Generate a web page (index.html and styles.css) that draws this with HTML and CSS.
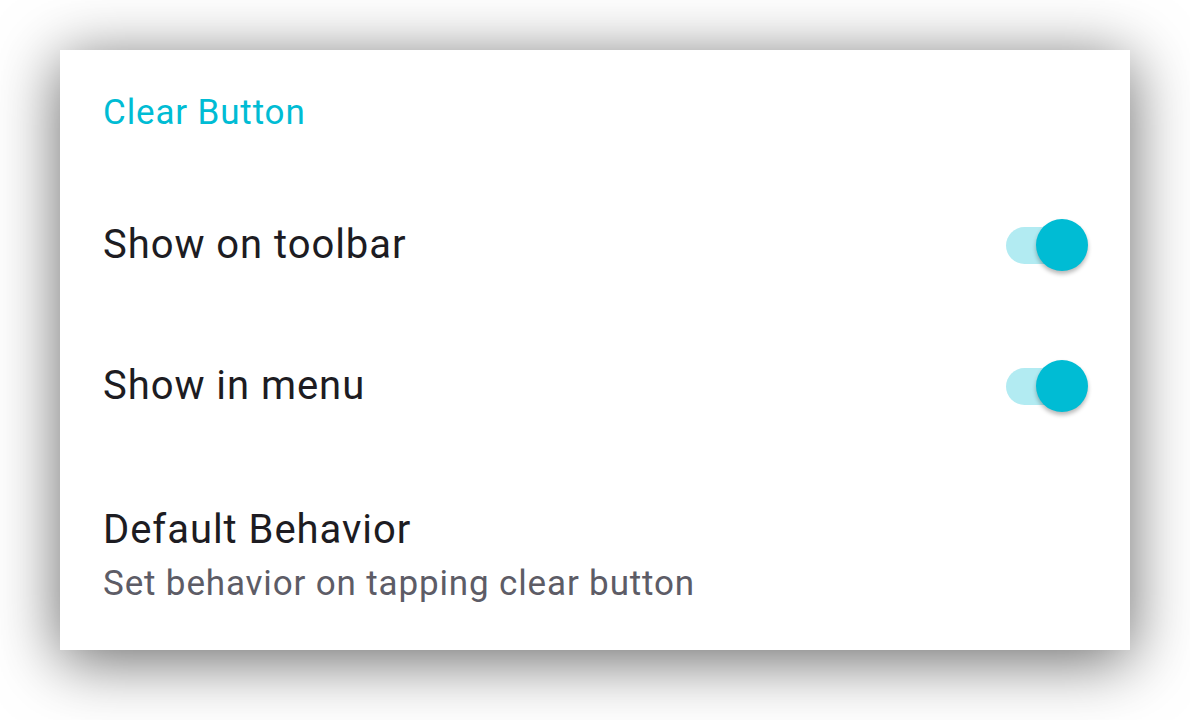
FILE: index.html
```html
<!DOCTYPE html>
<html>
<head>
<meta charset="utf-8">
<link rel="stylesheet" href="styles.css">
</head>
<body>
<div class="card">
  <div class="category">Clear Button</div>
  <div class="row">
    <div class="title">Show on toolbar</div>
    <div class="switch"><div class="track"></div><div class="thumb"></div></div>
  </div>
  <div class="row">
    <div class="title">Show in menu</div>
    <div class="switch"><div class="track"></div><div class="thumb"></div></div>
  </div>
  <div class="row-sum">
    <div class="title">Default Behavior</div>
    <div class="summary">Set behavior on tapping clear button</div>
  </div>
</div>
</body>
</html>
```
FILE: styles.css
```css
html, body {
  margin: 0;
  padding: 0;
  background: #ffffff;
}
body {
  width: 1190px;
  height: 720px;
  overflow: hidden;
  font-family: Roboto, "Liberation Sans", sans-serif;
  padding-top: 50px;
  padding-left: 60px;
  box-sizing: border-box;
}
.card {
  width: 1070px;
  height: 600px;
  background: #ffffff;
  box-shadow: 0 10px 60px rgba(0, 0, 0, 0.6);
  padding: 43px 42px 0 43px;
  box-sizing: border-box;
}
.category {
  font-size: 35px;
  line-height: 40px;
  letter-spacing: 0.85px;
  color: #00bcd4;
  margin-bottom: 41.5px;
}
.row {
  height: 141px;
  display: flex;
  align-items: center;
  justify-content: space-between;
}
.title {
  font-size: 40px;
  line-height: 46px;
  letter-spacing: 0.95px;
  color: #1d1c22;
}
.row-sum {
  padding-top: 50px;
}
.summary {
  margin-top: 11px;
  font-size: 35px;
  line-height: 40px;
  letter-spacing: 0.85px;
  color: #5d5c66;
}
.switch {
  position: relative;
  width: 82px;
  height: 52px;
  display: flex;
  align-items: center;
}
.track {
  width: 72px;
  height: 37px;
  border-radius: 18.5px;
  background: #b2ebf2;
}
.thumb {
  position: absolute;
  right: 0;
  top: 0;
  width: 52px;
  height: 52px;
  border-radius: 50%;
  background: #00bcd4;
  box-shadow: 0 3px 4px rgba(0, 0, 0, 0.28);
}
```
